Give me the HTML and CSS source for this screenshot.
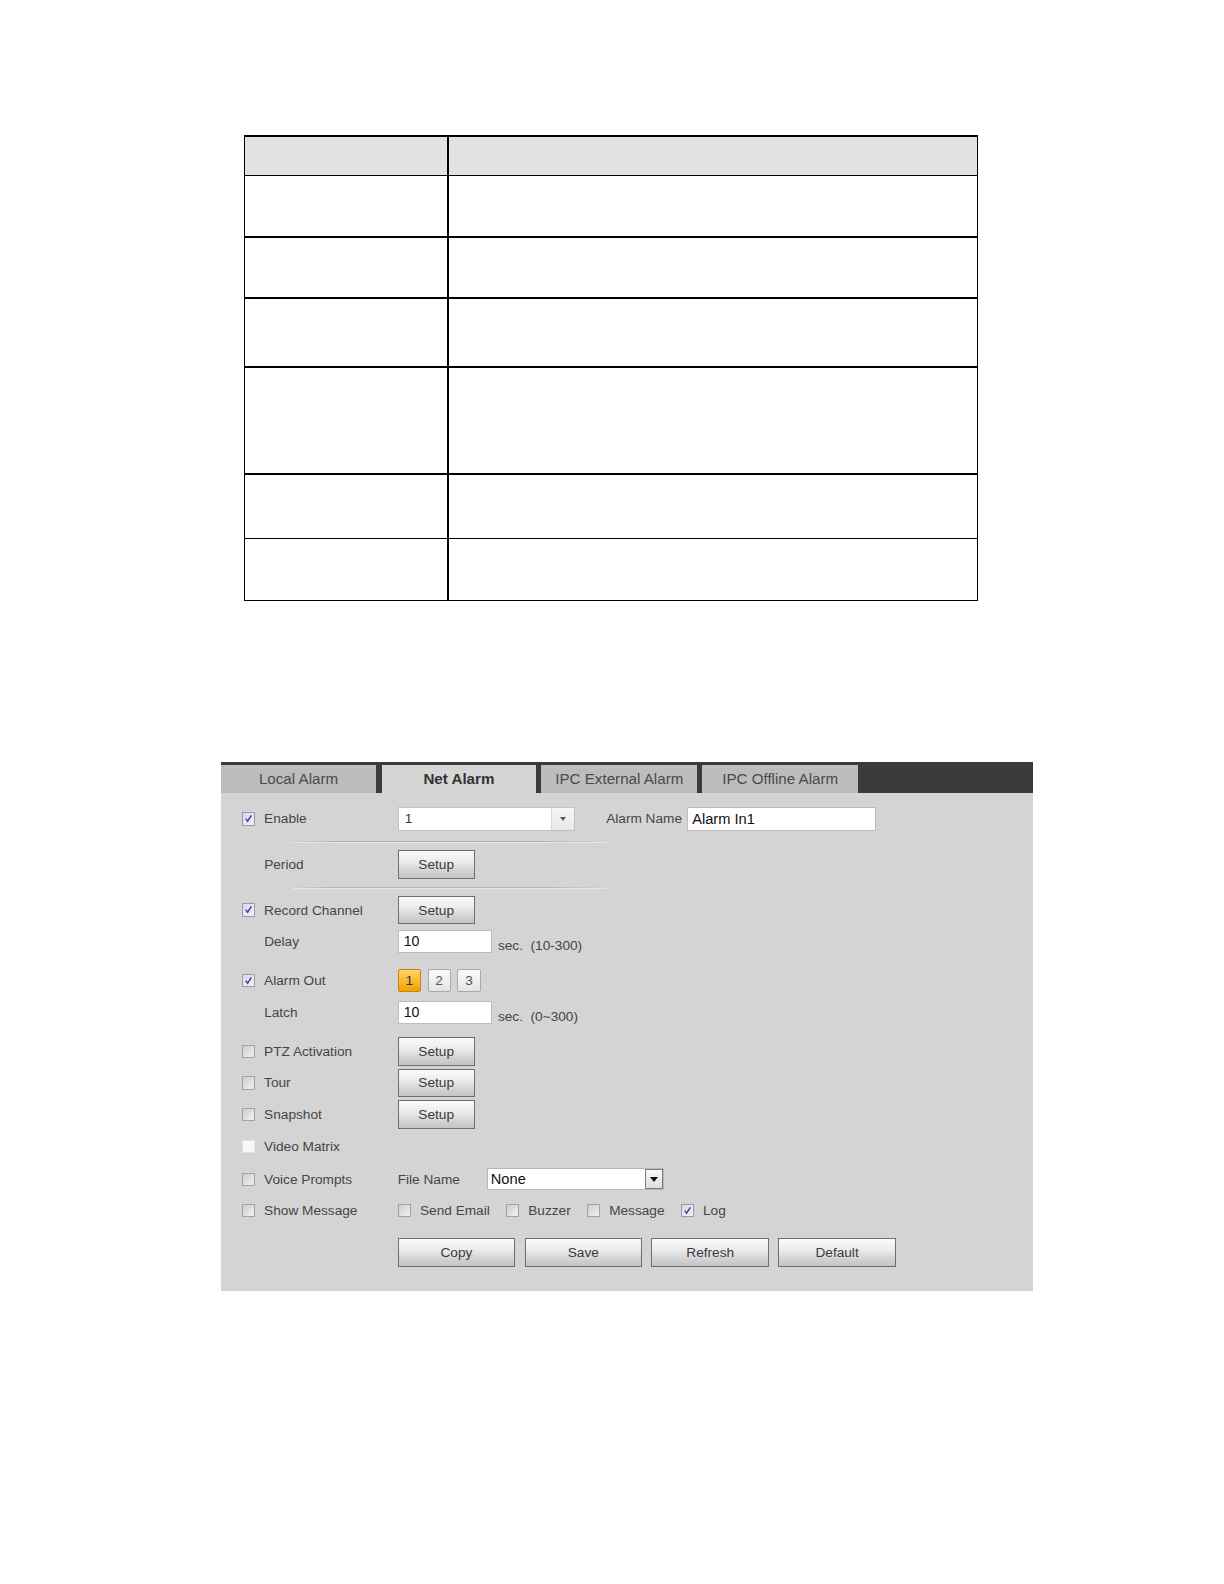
FILE: index.html
```html
<!DOCTYPE html>
<html>
<head>
<meta charset="utf-8">
<link rel="stylesheet" href="styles.css">
</head>
<body>
<div class="page">
  <table class="spec">
    <colgroup><col class="c1"><col class="c2"></colgroup>
    <tr class="head"><th></th><th></th></tr>
    <tr class="r61 thick"><td></td><td></td></tr>
    <tr class="r61 thick"><td></td><td></td></tr>
    <tr class="r68 thick"><td></td><td></td></tr>
    <tr class="r106 thick"><td></td><td></td></tr>
    <tr class="r63"><td></td><td></td></tr>
    <tr class="r62"><td></td><td></td></tr>
  </table>

  <div class="panel">
    <div class="tabs">
      <div class="tab">Local Alarm</div>
      <div class="tab active">Net Alarm</div>
      <div class="tab">IPC External Alarm</div>
      <div class="tab">IPC Offline Alarm</div>
    </div>
    <div class="form">
      <div class="row">
        <div class="lab"><span class="cb checked"><svg viewBox="0 0 13 13"><path d="M3.2 6.6 L5.4 9.6 L9.8 2.8" fill="none" stroke="#3c3ca6" stroke-width="1.7"/></svg></span>Enable</div>
        <div class="select sel-ch"><span class="sel-val">1</span><span class="sel-arrow"><i class="tri small"></i></span></div>
        <span class="txt name-lab">Alarm Name</span>
        <div class="input name-in">Alarm In1</div>
      </div>
      <div class="sep"><i></i></div>
      <div class="row">
        <div class="lab plain">Period</div>
        <div class="btn setup">Setup</div>
      </div>
      <div class="sep"><i></i></div>
      <div class="row">
        <div class="lab"><span class="cb checked"><svg viewBox="0 0 13 13"><path d="M3.2 6.6 L5.4 9.6 L9.8 2.8" fill="none" stroke="#3c3ca6" stroke-width="1.7"/></svg></span>Record Channel</div>
        <div class="btn setup">Setup</div>
      </div>
      <div class="row">
        <div class="lab plain">Delay</div>
        <div class="input num">10</div>
        <span class="txt unit">sec.&nbsp; (10-300)</span>
      </div>
      <div class="row gap-top">
        <div class="lab"><span class="cb checked"><svg viewBox="0 0 13 13"><path d="M3.2 6.6 L5.4 9.6 L9.8 2.8" fill="none" stroke="#3c3ca6" stroke-width="1.7"/></svg></span>Alarm Out</div>
        <div class="outs">
          <span class="out on">1</span>
          <span class="out">2</span>
          <span class="out">3</span>
        </div>
      </div>
      <div class="row">
        <div class="lab plain">Latch</div>
        <div class="input num">10</div>
        <span class="txt unit">sec.&nbsp; (0~300)</span>
      </div>
      <div class="row gap-top">
        <div class="lab"><span class="cb"></span>PTZ Activation</div>
        <div class="btn setup">Setup</div>
      </div>
      <div class="row">
        <div class="lab"><span class="cb"></span>Tour</div>
        <div class="btn setup">Setup</div>
      </div>
      <div class="row">
        <div class="lab"><span class="cb"></span>Snapshot</div>
        <div class="btn setup">Setup</div>
      </div>
      <div class="row tall">
        <div class="lab"><span class="cb blank"></span>Video Matrix</div>
      </div>
      <div class="row">
        <div class="lab"><span class="cb"></span>Voice Prompts</div>
        <span class="txt file-lab">File Name</span>
        <div class="select sel-file"><span class="sel-val big">None</span><span class="sel-arrow boxed"><i class="tri"></i></span></div>
      </div>
      <div class="row">
        <div class="lab"><span class="cb"></span>Show Message</div>
        <div class="checks">
          <span class="opt"><span class="cb"></span>Send Email</span>
          <span class="opt"><span class="cb"></span>Buzzer</span>
          <span class="opt"><span class="cb"></span>Message</span>
          <span class="opt"><span class="cb checked"><svg viewBox="0 0 13 13"><path d="M3.2 6.6 L5.4 9.6 L9.8 2.8" fill="none" stroke="#3c3ca6" stroke-width="1.7"/></svg></span>Log</span>
        </div>
      </div>
      <div class="actions">
        <div class="btn wide">Copy</div>
        <div class="btn wide">Save</div>
        <div class="btn wide">Refresh</div>
        <div class="btn wide">Default</div>
      </div>
    </div>
  </div>
</div>
</body>
</html>
```

FILE: styles.css
```css
html, body {
  margin: 0;
  padding: 0;
  background: #ffffff;
}
body {
  font-family: "Liberation Sans", Arial, sans-serif;
}
.page {
  zoom: 1.012;
  display: flex;
  flex-direction: column;
  align-items: flex-start;
  padding-top: 133px;
}

/* ---------- spec table ---------- */
.spec {
  margin-left: 241px;
  width: 725px;
  border-collapse: collapse;
  table-layout: fixed;
  border-top: 2px solid #000;
}
.spec .c1 { width: 201px; }
.spec th, .spec td {
  border: 1px solid #000;
  padding: 0;
}
.spec th:first-child, .spec td:first-child {
  border-right: 2px solid #000;
}
.spec .head th {
  background: #e1e1e1;
  height: 38px;
}
.spec .thick td { border-bottom: 2px solid #000; }
.spec .r61 td { height: 59px; }
.spec .r68 td { height: 66px; }
.spec .r106 td { height: 104px; }
.spec .r63 td { height: 62px; }
.spec .r62 td { height: 60px; }

/* ---------- alarm panel ---------- */
.panel {
  margin-top: 159px;
  margin-left: 218px;
  width: 803px;
  height: 523px;
  background: #d4d4d4;
  display: flex;
  flex-direction: column;
}
.tabs {
  height: 31px;
  background: #3b3b3b;
  display: flex;
  align-items: flex-end;
  gap: 5px;
  box-sizing: border-box;
}
.tab {
  width: 154px;
  height: 28px;
  background: #bdbdbd;
  color: #4a4a4a;
  font-size: 15px;
  display: flex;
  align-items: center;
  justify-content: center;
  padding-bottom: 2px;
  box-sizing: border-box;
}
.tab.active {
  background: #d5d5d5;
  color: #333;
  font-weight: bold;
  width: 153px;
}

.form {
  padding-top: 10px;
  display: flex;
  flex-direction: column;
}
.row {
  height: 31px;
  display: flex;
  align-items: center;
  color: #454545;
  font-size: 13.5px;
}
.row.gap-top { margin-top: 8px; }
.row.tall { height: 33px; }
.lab {
  width: 175px;
  padding-left: 21px;
  box-sizing: border-box;
  display: flex;
  align-items: center;
  flex: none;
}
.lab.plain { padding-left: 43px; }

.cb {
  width: 13px;
  height: 13px;
  box-sizing: border-box;
  border: 1px solid #a2a2a2;
  background: linear-gradient(135deg, #cacaca 0%, #e2e2e2 55%, #f0f0f0 100%);
  margin-right: 9px;
  flex: none;
  display: inline-block;
  position: relative;
}
.cb.checked {
  border-color: #9a9aae;
  background: linear-gradient(135deg, #d8d8e6 0%, #f2f2f8 100%);
}
.cb svg {
  position: absolute;
  left: 0;
  top: 0;
  width: 11px;
  height: 11px;
}
.cb.blank {
  border-color: #e4e4e4;
  background: #f8f8f8;
}

.txt { white-space: nowrap; }

.select {
  height: 23px;
  background: #fff;
  border: 1px solid #c2c2c2;
  box-sizing: border-box;
  display: flex;
  align-items: center;
  justify-content: space-between;
}
.sel-ch { width: 175px; }
.sel-val {
  padding-left: 6px;
  color: #333;
  font-size: 13.5px;
}
.sel-val.big {
  font-size: 14.5px;
  color: #111;
  padding-left: 3px;
}
.sel-arrow {
  width: 22px;
  height: 100%;
  border-left: 1px solid #d6d6d6;
  background: linear-gradient(#f6f6f6, #e8e8e8);
  display: flex;
  align-items: center;
  justify-content: center;
}
.tri {
  width: 0;
  height: 0;
  border-left: 4px solid transparent;
  border-right: 4px solid transparent;
  border-top: 5px solid #111;
}
.tri.small {
  border-left-width: 3.5px;
  border-right-width: 3.5px;
  border-top: 4px solid #555;
}
.name-lab {
  margin-left: 31px;
  margin-right: 5px;
}
.input {
  height: 23px;
  background: #fff;
  border: 1px solid #bdbdbd;
  box-sizing: border-box;
  display: flex;
  align-items: center;
  padding-left: 5px;
  color: #111;
  font-size: 14px;
}
.name-in {
  width: 187px;
  font-size: 14.5px;
  padding-left: 4px;
}
.input.num { width: 93px; }
.unit {
  margin-left: 6px;
  padding-top: 8px;
  font-size: 13.5px;
}

.sep {
  height: 14px;
  display: flex;
  align-items: center;
  padding-left: 72px;
}
.sep i {
  display: block;
  width: 310px;
  height: 1px;
  background: linear-gradient(90deg, rgba(176,176,176,0) 0%, #b4b4b4 12%, #b4b4b4 80%, rgba(176,176,176,0) 100%);
  box-shadow: 0 1px 0 #e6e6e6;
}

.btn {
  height: 28px;
  box-sizing: border-box;
  border: 1px solid #6e6e6e;
  background: linear-gradient(#fbfbfb 0%, #ececec 40%, #d2d2d2 75%, #c4c4c4 100%);
  color: #3a3a3a;
  font-size: 13.5px;
  display: flex;
  align-items: center;
  justify-content: center;
  flex: none;
}
.btn.setup { width: 76px; }
.btn.wide { width: 116px; }

.outs {
  display: flex;
  gap: 6.5px;
}
.out {
  width: 23px;
  height: 23px;
  box-sizing: border-box;
  border: 1px solid #a9a9a9;
  border-radius: 2px;
  background: linear-gradient(#fbfbfb, #e4e4e4);
  color: #555;
  font-size: 13.5px;
  display: flex;
  align-items: center;
  justify-content: center;
}
.out.on {
  border-color: #c18612;
  background: linear-gradient(#fdd66c 0%, #f8b524 60%, #f2a300 100%);
  color: #333;
}

.file-lab { width: 88px; }
.sel-file {
  width: 175px;
  height: 21px;
  border-color: #b8b8b8;
}
.sel-arrow.boxed {
  width: 18px;
  border: 1px solid #7c7c7c;
  box-sizing: border-box;
  background: linear-gradient(#fafafa, #dedede);
}

.checks {
  display: flex;
  gap: 16px;
  align-items: center;
}
.opt {
  display: flex;
  align-items: center;
}

.actions {
  margin-top: 12px;
  padding-left: 175px;
  display: flex;
  gap: 9.4px;
  font-size: 13.5px;
}
```
